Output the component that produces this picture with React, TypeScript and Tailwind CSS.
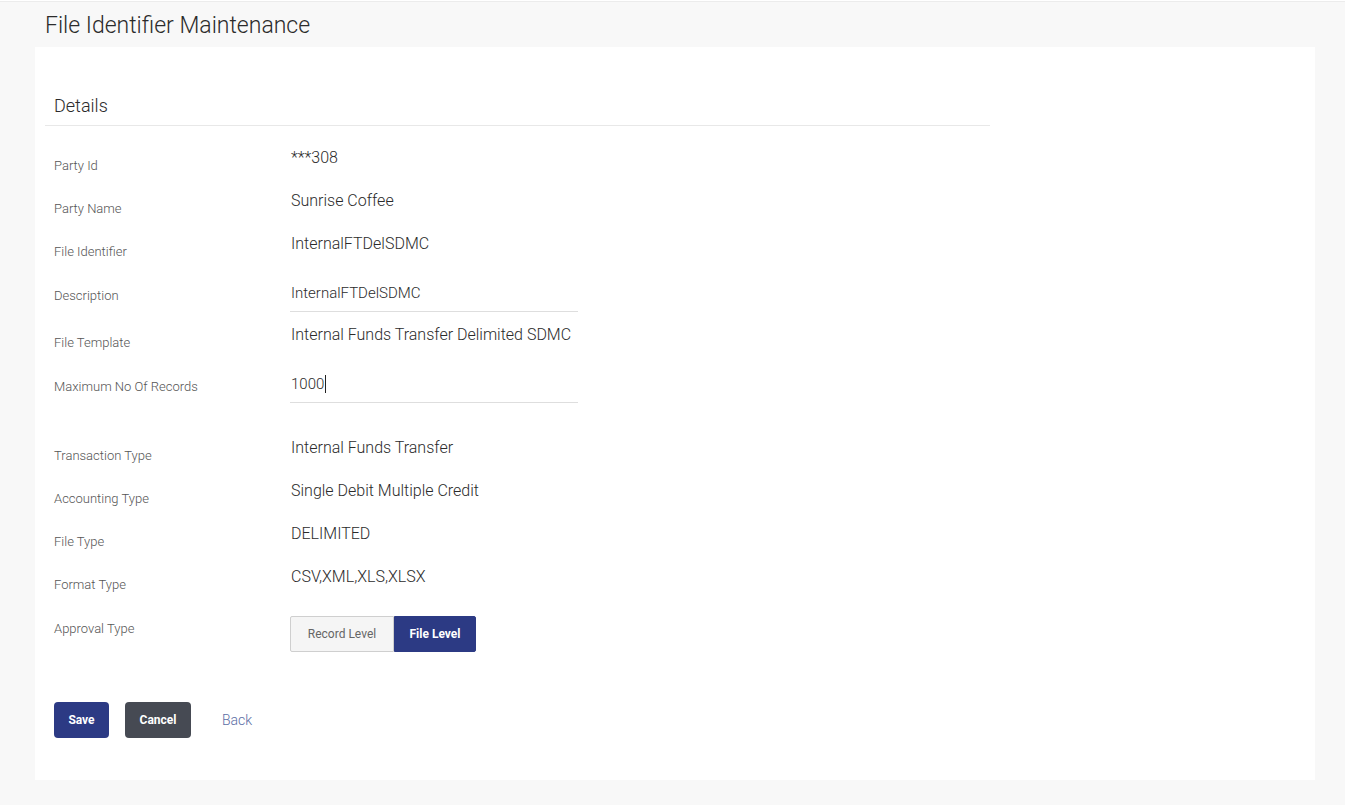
import React from "react";

const FONT = { fontFamily: "Roboto, 'Open Sans', Arial, sans-serif" };

// plain read-only row: value sits 8px higher than the label
function TextRow({ label, value, h = "h-[43px]" }: { label: string; value: string; h?: string }) {
  return (
    <div className={`flex ${h}`}>
      <div className="w-[237px] shrink-0 pt-[10px] text-[13px] leading-[18px] font-light text-[#555555]">{label}</div>
      <div className="text-[16px] leading-[22px] font-light text-[#2b2b2b]">{value}</div>
    </div>
  );
}

function InputRow({ label, value, caret, h }: { label: string; value: string; caret?: boolean; h: string }) {
  return (
    <div className={`flex items-start ${h}`}>
      <div className="w-[237px] shrink-0 pt-[5px] text-[13px] leading-[18px] font-light text-[#555555]">{label}</div>
      <div className="w-[288px] -ml-px border-b border-[#dedede] pb-[7px] pl-px text-[15px] leading-[22px] font-light text-[#2b2b2b]">
        {value}
        {caret && <span className="inline-block w-px h-[18px] bg-[#222] align-middle ml-px -mt-[2px]" />}
      </div>
    </div>
  );
}

export default function App() {
  return (
    <div className="min-h-[805px] bg-[#f8f8f8] border-t border-[#ececec] mt-px" style={FONT}>
      <div className="h-[45px] pl-[45px] pt-[9px] text-[23px] leading-[30px] font-light text-[#2b2b2b]">
        File Identifier Maintenance
      </div>

      <div className="ml-[35px] w-[1280px] h-[733px] bg-white px-[10px]">
        <div className="pt-[47px] pl-[9px] text-[18px] leading-[24px] font-light text-[#2b2b2b]">Details</div>
        <div className="w-[945px] mt-[7px] border-b border-[#e8e8e8]" />

        <div className="pl-[9px] pt-[21px]">
          <TextRow label="Party Id" value="***308" />
          <TextRow label="Party Name" value="Sunrise Coffee" />
          <TextRow label="File Identifier" value="InternalFTDelSDMC" h="h-[49px]" />
          <InputRow label="Description" value="InternalFTDelSDMC" h="h-[42px]" />
          <TextRow label="File Template" value="Internal Funds Transfer Delimited SDMC" h="h-[49px]" />
          <InputRow label="Maximum No Of Records" value="1000" caret h="h-[64px]" />
          <TextRow label="Transaction Type" value="Internal Funds Transfer" />
          <TextRow label="Accounting Type" value="Single Debit Multiple Credit" />
          <TextRow label="File Type" value="DELIMITED" />
          <TextRow label="Format Type" value="CSV,XML,XLS,XLSX" />

          <div className="flex h-[93px]">
            <div className="w-[236px] shrink-0 pt-[11px] text-[13px] leading-[18px] font-light text-[#555555]">Approval Type</div>
            <div className="mt-[7px] flex h-[36px] text-[12px]">
              <button className="w-[104px] bg-[#f5f5f5] border border-[#cfcfcf] rounded-l-[2px] text-[#666666]">
                Record Level
              </button>
              <button className="w-[82px] bg-[#2c3a84] border border-[#2c3a84] rounded-r-[2px] text-white font-bold">
                File Level
              </button>
            </div>
          </div>

          <div className="flex items-center gap-4">
            <button className="w-[55px] h-[36px] rounded-[4px] bg-[#2c3a84] text-white text-[12px] font-bold">Save</button>
            <button className="w-[66px] h-[36px] rounded-[4px] bg-[#464a53] text-white text-[12px] font-bold">Cancel</button>
            <button className="ml-[15px] text-[14px] font-light text-[#5b6ea5]">Back</button>
          </div>
        </div>
      </div>
    </div>
  );
}
